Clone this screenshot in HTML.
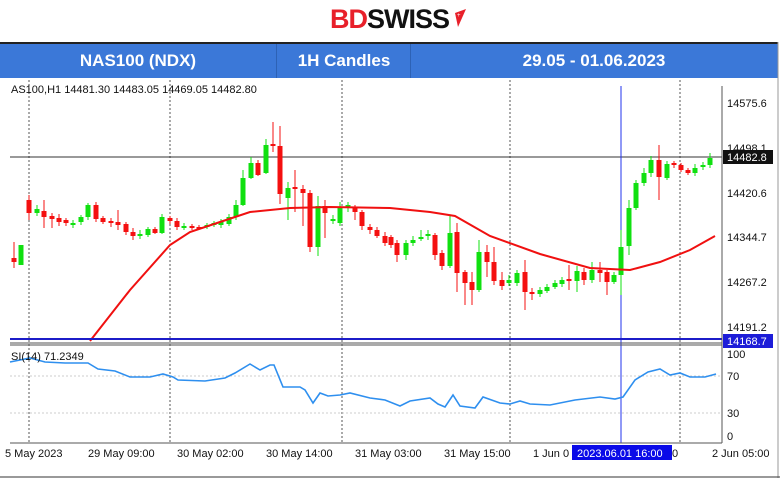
<!DOCTYPE html>
<html><head><meta charset="utf-8"><style>
html,body{margin:0;padding:0;background:#fff;width:780px;height:482px;overflow:hidden;font-family:"Liberation Sans",sans-serif}
.logo{position:absolute;left:330px;top:4px;font-weight:bold;font-size:27px;letter-spacing:-1px;line-height:30px}
.bar{position:absolute;left:0;top:42px;width:778px;height:36px;background:#3b78d8;border-top:2px solid #222;box-sizing:border-box}
.bar div{position:absolute;top:0;height:34px;line-height:34px;color:#fff;font-weight:bold;font-size:17px;text-align:center}
svg{position:absolute;left:0;top:0}
</style></head><body>
<div class="logo"><span style="color:#e8202a">BD</span><span style="color:#111">SWISS</span></div>
<svg width="780" height="482" style="z-index:1"><polygon points="455,13 466,9 458,27" fill="#e8202a"/><text x="457" y="17" font-size="6" fill="#fff" font-family="Liberation Sans">+</text></svg>
<div class="bar">
<div style="left:0;width:276px">NAS100 (NDX)</div>
<div style="left:276px;width:134px;border-left:1px solid #2d62b5">1H Candles</div>
<div style="left:410px;width:366px;border-left:1px solid #2d62b5">29.05 - 01.06.2023</div>
</div>
<svg id="c" width="780" height="482" font-family="Liberation Sans" font-size="11">
<line x1="778" y1="42" x2="778" y2="478" stroke="#999"/>
<line x1="0" y1="477" x2="780" y2="477" stroke="#333"/>
<g stroke="#555" stroke-dasharray="2,2">
<line x1="29" y1="80" x2="29" y2="443"/><line x1="170" y1="80" x2="170" y2="443"/>
<line x1="342" y1="80" x2="342" y2="443"/><line x1="510" y1="80" x2="510" y2="443"/>
<line x1="680" y1="80" x2="680" y2="443"/>
</g>
<g stroke="#ccc" stroke-dasharray="2,2"><line x1="10" y1="376" x2="722" y2="376"/><line x1="10" y1="413" x2="722" y2="413"/></g>
<line x1="10" y1="157" x2="722" y2="157" stroke="#333"/>
<line x1="621" y1="86" x2="621" y2="443" stroke="#2233ee"/>
<g id="cd"></g>
<polyline fill="none" stroke="#f01010" stroke-width="2" points="90,341 130,290 170,245 190,232 220,222 250,212 290,208 330,207 390,208 430,212 455,216 490,236 540,254 590,268 630,270 660,262 690,250 715,236"/>
<line x1="10" y1="339" x2="722" y2="339" stroke="#1c1cc8" stroke-width="2"/>
<line x1="10" y1="343" x2="722" y2="343" stroke="#555"/>
<line x1="10" y1="345" x2="722" y2="345" stroke="#555"/>
<line x1="722" y1="86" x2="722" y2="443" stroke="#555"/>
<line x1="10" y1="443" x2="722" y2="443" stroke="#555"/>
<polyline fill="none" stroke="#2e8fef" stroke-width="1.6" points="10,362 30,358 45,362 65,363 88,363 98,369 115,371 130,377 150,377 163,374 173,377 178,380 205,381 225,378 235,373 250,364 260,370 270,365 274,365 283,387 300,387 305,390 313,403 320,393 328,396 340,395 350,393 370,398 385,400 400,406 410,401 430,398 438,404 445,407 453,395 460,406 475,408 483,397 500,403 510,404 520,401 530,404 550,405 575,400 600,397 615,399 623,397 635,380 648,372 660,369 670,375 680,373 690,377 705,377 716,374"/>
<text x="11" y="93" fill="#111">AS100,H1  14481.30 14483.05 14469.05 14482.80</text>
<text x="11" y="360" fill="#111">SI(14) 71.2349</text>
<g fill="#111"><text x="727" y="107">14575.6</text><text x="727" y="152">14498.1</text><text x="727" y="197">14420.6</text><text x="727" y="241">14344.7</text><text x="727" y="286">14267.2</text><text x="727" y="331">14191.2</text>
<text x="727" y="358">100</text><text x="727" y="380">70</text><text x="727" y="417">30</text><text x="727" y="440">0</text></g>
<rect x="723" y="150" width="50" height="14" fill="#111"/><text x="727" y="161" fill="#fff">14482.8</text>
<rect x="723" y="334" width="50" height="14" fill="#1c1cd8"/><text x="727" y="345" fill="#fff">14168.7</text>
<g fill="#111"><text x="5" y="457">5 May 2023</text><text x="88" y="457">29 May 09:00</text><text x="177" y="457">30 May 02:00</text><text x="266" y="457">30 May 14:00</text><text x="355" y="457">31 May 03:00</text><text x="444" y="457">31 May 15:00</text><text x="533" y="457">1 Jun 0</text><text x="672" y="457">0</text><text x="712" y="457">2 Jun 05:00</text></g>
<rect x="572" y="445" width="100" height="15" fill="#0a0ae8"/><text x="577" y="457" fill="#fff">2023.06.01 16:00</text>
</svg>
<script>
var d=[[14,'r',258,262,242,268],[21,'g',245,265,245,265],[29,'r',200,213,195,220],[37,'g',209,213,205,216],[44,'r',211,217,200,228],[52,'r',216,219,213,228],[59,'r',218,222,214,226],[66,'r',220,223,218,226],[73,'g',223,225,220,228],[81,'g',217,222,215,225],[88,'g',205,217,203,220],[96,'r',205,219,202,222],[103,'r',218,222,216,224],[111,'r',221,223,218,227],[118,'r',222,225,210,230],[126,'r',224,232,222,235],[133,'r',232,236,228,240],[140,'g',234,236,230,239],[148,'g',229,235,227,237],[155,'r',229,233,227,234],[162,'g',217,233,214,234],[170,'r',218,221,216,224],[177,'r',221,227,218,230],[184,'g',226,228,223,230],[192,'r',226,228,224,230],[199,'r',227,229,225,230],[207,'g',225,227,223,229],[214,'g',223,225,221,227],[221,'g',222,225,219,228],[229,'g',217,224,214,226],[236,'g',205,217,200,220],[243,'g',178,205,170,206],[251,'g',163,178,157,179],[258,'r',163,175,160,176],[266,'g',145,173,139,174],[273,'r',144,146,122,152],[280,'r',146,194,126,204],[288,'g',188,198,182,220],[295,'r',187,189,170,212],[303,'r',189,193,185,226],[310,'r',193,247,190,252],[318,'g',206,247,196,256],[325,'r',206,213,200,238],[333,'g',219,221,215,224],[340,'g',208,223,202,226],[348,'g',205,208,202,212],[355,'r',208,212,205,220],[362,'r',212,226,210,230],[370,'r',227,230,224,234],[377,'r',230,236,227,238],[385,'r',236,243,232,246],[391,'r',237,245,235,248],[397,'r',243,255,240,262],[406,'g',243,255,240,260],[413,'g',240,243,236,246],[421,'g',237,239,230,241],[428,'g',234,236,230,240],[435,'r',235,255,233,260],[442,'r',253,266,250,270],[450,'g',233,266,215,268],[457,'r',232,273,223,292],[465,'r',272,283,270,305],[472,'r',282,290,272,305],[479,'g',252,290,240,292],[487,'r',252,262,245,277],[494,'r',262,281,247,285],[502,'r',280,286,272,290],[509,'g',280,283,275,286],[517,'g',273,283,270,286],[525,'r',272,292,260,310],[532,'r',292,294,288,300],[540,'g',290,294,287,297],[547,'g',287,291,284,293],[555,'g',283,287,280,289],[562,'g',280,284,277,287],[569,'r',279,281,265,290],[577,'g',271,281,266,292],[584,'r',272,280,268,285],[592,'g',270,280,262,283],[600,'r',270,273,262,282],[607,'r',272,282,270,295],[614,'g',275,282,272,284],[621,'g',247,275,230,295],[629,'g',208,246,200,255],[636,'g',183,208,180,210],[644,'g',173,183,168,186],[651,'g',160,173,156,177],[659,'r',160,177,145,200],[667,'g',164,178,161,180],[674,'r',163,165,161,168],[681,'r',165,170,163,172],[688,'r',170,173,168,175],[695,'g',168,173,164,176],[703,'g',165,167,162,170],[710,'g',158,165,153,168]];
var g=document.getElementById('cd'),s='';
d.forEach(function(c){var col=c[1]=='r'?'#f41010':'#10e010';var h=Math.max(c[3]-c[2],2);
s+='<line x1="'+c[0]+'" x2="'+c[0]+'" y1="'+c[4]+'" y2="'+c[5]+'" stroke="'+col+'"/><rect x="'+(c[0]-2.5)+'" y="'+c[2]+'" width="5" height="'+h+'" fill="'+col+'"/>';});
g.innerHTML=s;
</script>
</body></html>
